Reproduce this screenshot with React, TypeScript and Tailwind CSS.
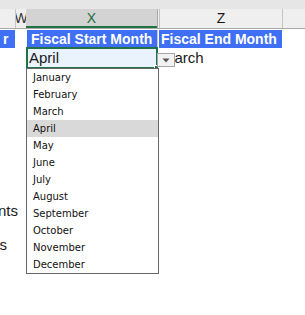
import React from "react";

const months = [
  "January",
  "February",
  "March",
  "April",
  "May",
  "June",
  "July",
  "August",
  "September",
  "October",
  "November",
  "December",
];

export default function App() {
  return (
    <div
      className="relative w-[305px] h-[315px] overflow-hidden bg-white text-[#1a1a1a]"
      style={{ fontFamily: '"Liberation Sans", Arial, sans-serif' }}
    >
      {/* top strip */}
      <div className="h-[9px] bg-[#e6e6e6]" />

      {/* column headers */}
      <div className="flex h-[20px] bg-[#efefef] border-b border-[#a8a8a8] text-[14px] leading-[19px]">
        <div className="w-[16px] shrink-0 border-r border-[#c4c4c4]" />
        <div className="w-[10px] shrink-0 overflow-hidden flex justify-center text-[#333]">
          <span>W</span>
        </div>
        <div className="w-[131px] shrink-0 bg-[#d3d3d3] text-[#1f6b42] text-center shadow-[inset_0_-2px_0_#217346]">
          X
        </div>
        <div className="w-[2px] shrink-0 border-l border-[#a8a8a8]" />
        <div className="w-[124px] shrink-0 border-l border-r border-[#c4c4c4] text-center">
          Z
        </div>
        <div className="flex-1" />
      </div>

      {/* row 2: header labels */}
      <div className="flex h-[19px] pt-px text-[14px] font-bold text-white leading-[18px]">
        <div className="w-[15px] shrink-0 bg-[#3f6ff4] pl-[3px]">r</div>
        <div className="w-[12px] shrink-0" />
        <div className="w-[130px] shrink-0 bg-[#3f6ff4] pl-[4px] whitespace-nowrap">
          Fiscal Start Month
        </div>
        <div className="w-[2px] shrink-0 border-l border-[#c8c8c8]" />
        <div className="w-[123px] shrink-0 bg-[#3f6ff4] pl-[2px] whitespace-nowrap">
          Fiscal End Month
        </div>
      </div>

      {/* row 3: selected cell */}
      <div className="flex h-[21px] text-[15px]">
        <div className="w-[26px] shrink-0" />
        <div className="relative -mt-px w-[132px] h-[22px] shrink-0 border-2 border-[#217346] bg-[#eaf2fc] pl-[1px] flex items-center">
          April
          <div className="absolute -right-[3px] -bottom-[3px] w-[5px] h-[5px] bg-[#217346] border border-white" />
        </div>
        <div className="pl-[4px] flex items-center">March</div>
      </div>

      {/* dropdown arrow button */}
      <div className="absolute left-[157px] top-[53px] w-[18px] h-[14px] bg-[#f2f2f2] border border-[#a6a6a6] flex items-center justify-center">
        <svg width="8" height="5" viewBox="0 0 8 5">
          <path d="M0.5 0.5 L7.5 0.5 L4 4.5 Z" fill="#555" />
        </svg>
      </div>

      {/* left clipped texts */}
      <div className="flex flex-col text-[15px] leading-[20px]">
        <div className="mt-[132px] w-[18px] flex justify-end whitespace-nowrap">nts</div>
        <div className="mt-[14px] w-[7px] flex justify-end whitespace-nowrap">s</div>
      </div>

      {/* dropdown list */}
      <div
        className="absolute left-[26px] top-[68px] w-[133px] h-[206px] bg-white border border-[#666]"
        style={{ fontFamily: '"DejaVu Sans", Verdana, sans-serif' }}
      >
        {months.map((m) => (
          <div
            key={m}
            className={
              "h-[17px] pl-[6px] text-[10px] leading-[17px] text-[#111] " +
              (m === "April" ? "bg-[#d9d9d9]" : "")
            }
          >
            {m}
          </div>
        ))}
      </div>
    </div>
  );
}
